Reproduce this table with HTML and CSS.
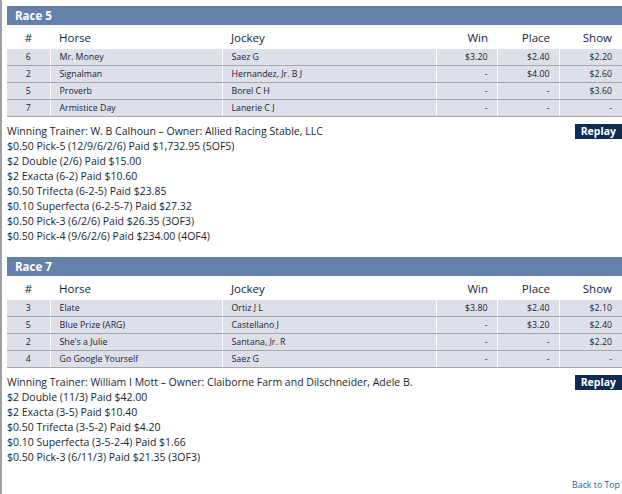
FILE: index.html
```html
<!DOCTYPE html>
<html>
<head>
<meta charset="utf-8">
<link rel="stylesheet" href="styles.css">
</head>
<body>
<div class="page">
  <section class="race">
    <div class="race-title">Race 5</div>
    <table class="results">
      <colgroup><col class="c-num"><col class="c-horse"><col class="c-jockey"><col class="c-win"><col class="c-place"><col class="c-show"></colgroup>
      <thead>
        <tr><th class="num">#</th><th>Horse</th><th>Jockey</th><th class="money">Win</th><th class="money">Place</th><th class="money last">Show</th></tr>
      </thead>
      <tbody>
        <tr><td class="num">6</td><td>Mr. Money</td><td>Saez G</td><td class="money">$3.20</td><td class="money">$2.40</td><td class="money last">$2.20</td></tr>
        <tr><td class="num">2</td><td>Signalman</td><td>Hernandez, Jr. B J</td><td class="money">-</td><td class="money">$4.00</td><td class="money last">$2.60</td></tr>
        <tr><td class="num">5</td><td>Proverb</td><td>Borel C H</td><td class="money">-</td><td class="money">-</td><td class="money last">$3.60</td></tr>
        <tr><td class="num">7</td><td>Armistice Day</td><td>Lanerie C J</td><td class="money">-</td><td class="money">-</td><td class="money last">-</td></tr>
      </tbody>
    </table>
    <div class="payouts">
      <div class="trainer-row">
        <p>Winning Trainer: W. B Calhoun – Owner: Allied Racing Stable, LLC</p>
        <a class="replay" href="#">Replay</a>
      </div>
      <p>$0.50 Pick-5 (12/9/6/2/6) Paid $1,732.95 (5OF5)</p>
      <p>$2 Double (2/6) Paid $15.00</p>
      <p>$2 Exacta (6-2) Paid $10.60</p>
      <p>$0.50 Trifecta (6-2-5) Paid $23.85</p>
      <p>$0.10 Superfecta (6-2-5-7) Paid $27.32</p>
      <p>$0.50 Pick-3 (6/2/6) Paid $26.35 (3OF3)</p>
      <p>$0.50 Pick-4 (9/6/2/6) Paid $234.00 (4OF4)</p>
    </div>
  </section>

  <section class="race">
    <div class="race-title">Race 7</div>
    <table class="results">
      <colgroup><col class="c-num"><col class="c-horse"><col class="c-jockey"><col class="c-win"><col class="c-place"><col class="c-show"></colgroup>
      <thead>
        <tr><th class="num">#</th><th>Horse</th><th>Jockey</th><th class="money">Win</th><th class="money">Place</th><th class="money last">Show</th></tr>
      </thead>
      <tbody>
        <tr><td class="num">3</td><td>Elate</td><td>Ortiz J L</td><td class="money">$3.80</td><td class="money">$2.40</td><td class="money last">$2.10</td></tr>
        <tr><td class="num">5</td><td>Blue Prize (ARG)</td><td>Castellano J</td><td class="money">-</td><td class="money">$3.20</td><td class="money last">$2.40</td></tr>
        <tr><td class="num">2</td><td>She's a Julie</td><td>Santana, Jr. R</td><td class="money">-</td><td class="money">-</td><td class="money last">$2.20</td></tr>
        <tr><td class="num">4</td><td>Go Google Yourself</td><td>Saez G</td><td class="money">-</td><td class="money">-</td><td class="money last">-</td></tr>
      </tbody>
    </table>
    <div class="payouts">
      <div class="trainer-row">
        <p>Winning Trainer: William I Mott – Owner: Claiborne Farm and Dilschneider, Adele B.</p>
        <a class="replay" href="#">Replay</a>
      </div>
      <p>$2 Double (11/3) Paid $42.00</p>
      <p>$2 Exacta (3-5) Paid $10.40</p>
      <p>$0.50 Trifecta (3-5-2) Paid $4.20</p>
      <p>$0.10 Superfecta (3-5-2-4) Paid $1.66</p>
      <p>$0.50 Pick-3 (6/11/3) Paid $21.35 (3OF3)</p>
    </div>
  </section>

  <div class="back"><a href="#">Back to Top</a></div>
</div>
</body>
</html>
```

FILE: styles.css
```css
html, body {
  margin: 0;
  padding: 0;
  background: #ffffff;
}
body {
  font-family: "Open Sans", "Noto Sans", "Liberation Sans", sans-serif;
  color: #1a2238;
  width: 622px;
  height: 494px;
  overflow: hidden;
}
.page {
  border-left: 2px solid #a0a0a0;
  min-height: 494px;
  box-sizing: border-box;
  padding: 6px 0 0 5px;
}
.race {
  margin-bottom: 13px;
}
.race-title {
  background: #6482a9;
  color: #ffffff;
  font-weight: 700;
  font-size: 11.5px;
  height: 19px;
  line-height: 19px;
  padding-left: 8px;
}
.results {
  width: 615px;
  border-collapse: collapse;
  table-layout: fixed;
}
.c-num { width: 43px; }
.c-horse { width: 172px; }
.c-jockey { width: 214px; }
.c-win { width: 61px; }
.c-place { width: 62px; }
.c-show { width: 63px; }
.results th {
  font-weight: 400;
  font-size: 11.5px;
  color: #151d3b;
  text-align: left;
  height: 24px;
  padding: 0 0 0 9px;
  vertical-align: middle;
}
.results td {
  background: #dde0e8;
  font-size: 8.8px;
  color: #1a2238;
  height: 16px;
  padding: 0 0 0 9px;
  border-right: 1px solid #ffffff;
  border-bottom: 1px solid #a8a8ab;
  white-space: nowrap;
}
.results td:last-child { border-right: none; }
.results .num {
  text-align: center;
  padding: 0;
}
.results .money {
  text-align: right;
  padding: 0 9px 0 0;
}
.results .money.last {
  padding-right: 10px;
}
.payouts {
  margin-top: 7px;
  font-size: 10.5px;
  line-height: 15px;
  color: #1a1f33;
}
.payouts p {
  margin: 0;
}
.trainer-row {
  display: flex;
  justify-content: space-between;
  align-items: center;
}
.replay {
  background: #0c2b57;
  color: #ffffff;
  font-weight: 700;
  font-size: 10.5px;
  text-decoration: none;
  height: 15px;
  line-height: 15px;
  padding: 0 6px;
}
.back {
  display: flex;
  justify-content: flex-end;
  padding-right: 2px;
  margin-top: 14px;
}
.back a {
  color: #1e5fa8;
  font-size: 8.8px;
  text-decoration: none;
}
```
